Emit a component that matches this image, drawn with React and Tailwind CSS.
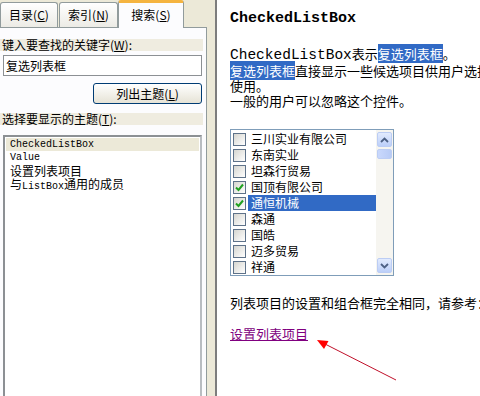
import React from 'react'

const items = [
  { label: '三川实业有限公司', on: false },
  { label: '东南实业', on: false },
  { label: '坦森行贸易', on: false },
  { label: '国顶有限公司', on: true },
  { label: '通恒机械', on: true, sel: true },
  { label: '森通', on: false },
  { label: '国皓', on: false },
  { label: '迈多贸易', on: false },
  { label: '祥通', on: false },
]

function Check({ on }) {
  return (
    <span className="flex h-[13px] w-[13px] shrink-0 items-center justify-center border border-[#5e7289] bg-linear-to-br from-[#d6d6d0] to-white">
      {on && (
        <svg width="9" height="9" viewBox="0 0 9 9">
          <path d="M1 4.5 L3.5 7 L8 1.5" stroke="#21a121" strokeWidth="2" fill="none" />
        </svg>
      )}
    </span>
  )
}

function ScrollBtn({ up }) {
  return (
    <div className="flex h-[15px] w-[15px] items-center justify-center rounded-[2px] border border-[#bccdf4] bg-linear-to-b from-[#e2ebfe] to-[#bccff9]">
      <svg width="9" height="6" viewBox="0 0 9 6">
        <path d={up ? 'M1 5 L4.5 1.5 L8 5' : 'M1 1 L4.5 4.5 L8 1'} stroke="#4d6185" strokeWidth="1.8" fill="none" />
      </svg>
    </div>
  )
}

const lat = "font-['Liberation_Mono',monospace] text-[10px]"

export default function App() {
  return (
    <div className="relative flex h-[396px] w-[480px] overflow-hidden bg-white font-['Noto_Sans_CJK_SC',sans-serif] text-black">
      {/* left: tabbed help pane */}
      <div className="flex w-[207px] shrink-0 flex-col bg-[#ece9d8]">
        <div className="flex h-[27px] items-end text-[12px]">
          <div className="flex h-[25px] w-[58px] items-center justify-center rounded-t-[3px] border border-b-0 border-[#919b9c] bg-linear-to-b from-white to-[#ecebe5]">
            目录(<u>C</u>)
          </div>
          <div className="ml-[1px] flex h-[25px] w-[59px] items-center justify-center rounded-t-[3px] border border-b-0 border-[#919b9c] bg-linear-to-b from-white to-[#ecebe5]">
            索引(<u>N</u>)
          </div>
          <div className="relative z-10 -mb-px flex h-[28px] w-[66px] items-center justify-center rounded-t-[3px] border-x border-t-[3px] border-x-[#919b9c] border-t-[#f5b440] bg-[#fcfcfe] pb-[2px]">
            搜索(<u>S</u>)
          </div>
        </div>
        <div className="flex flex-1 flex-col border-t border-r border-[#919b9c] bg-[#fcfcfe] text-[12px]">
          <div className="mt-[11px] mr-[3px] h-[12px] bg-[#efece0] pl-[2px] leading-[12px]">
            键入要查找的关键字(<u>W</u>):
          </div>
          <div className="mt-[4px] ml-[3px] h-[21px] w-[199px] border border-[#8c9094] bg-white pl-[2px] leading-[19px]">
            复选列表框
          </div>
          <div className="mt-[7px] ml-[93px] flex h-[21px] w-[109px] items-center justify-center rounded-[3px] border border-[#003c74] bg-linear-to-b from-white to-[#e6e3d6]">
            列出主题(<u>L</u>)
          </div>
          <div className="mt-[9px] mr-[3px] h-[12px] bg-[#efece0] pl-[2px] leading-[12px]">
            选择要显示的主题(<u>T</u>):
          </div>
          <div className="mt-[10px] ml-[3px] w-[199px] flex-1 border-[2px] border-[#8c9094] border-r-[#b9bdc1] border-b-0 bg-white p-px leading-[13px]">
            <div className={'bg-[#ece9d8] pl-[4px] ' + lat}>CheckedListBox</div>
            <div className={'pl-[4px] ' + lat}>Value</div>
            <div className="pl-[4px]">设置列表项目</div>
            <div className="pl-[4px]">
              与<span className={lat}>ListBox</span>通用的成员
            </div>
          </div>
        </div>
      </div>

      {/* splitter */}
      <div className="w-[8px] shrink-0 bg-[#ece9d8]" />
      <div className="w-[2px] shrink-0 bg-[#7d7d7d]" />

      {/* right: topic page */}
      <div className="flex-1 whitespace-nowrap pl-[13px]">
        <div className="mt-[10px] font-['Liberation_Mono',monospace] text-[15px] leading-[18px] font-bold">
          CheckedListBox
        </div>
        <div className="mt-[18px] text-[13px] leading-[15px]">
          <div>
            <span className="font-['Liberation_Mono',monospace] text-[14.5px]">CheckedListBox</span>表示
            <span className="bg-[#316ac5] text-white">复选列表框</span>。
          </div>
          <div>
            <span className="bg-[#316ac5] text-white">复选列表框</span>直接显示一些候选项目供用户选择，
          </div>
          <div>使用。</div>
          <div>一般的用户可以忽略这个控件。</div>
        </div>

        <div className="mt-[21px] flex h-[147px] w-[164px] border border-[#7f9db9] bg-white">
          <div className="flex flex-1 flex-col pt-px text-[12px] leading-[16px]">
            {items.map(it => (
              <div key={it.label} className="flex h-[16px] items-center pl-[2px]">
                <Check on={it.on} />
                <span className={'ml-[2px] flex-1 pl-[3px] ' + (it.sel ? 'bg-[#316ac5] text-white' : '')}>
                  {it.label}
                </span>
              </div>
            ))}
          </div>
          <div className="flex w-[17px] flex-col items-center bg-[#f6f5f0] py-[2px]">
            <ScrollBtn up />
            <div className="mt-[2px] h-[10px] w-[15px] rounded-[2px] border border-[#bccdf4] bg-linear-to-r from-[#c9d8fc] to-[#b8cbf6]" />
            <div className="flex-1" />
            <ScrollBtn />
          </div>
        </div>

        <div className="mt-[19px] text-[13px] leading-[15px]">列表项目的设置和组合框完全相同，请参考：</div>
        <div className="mt-[16px] text-[13px] leading-[15px] text-[#800080] underline">设置列表项目</div>
      </div>

      {/* red annotation arrow */}
      <svg className="pointer-events-none absolute top-0 left-0" width="480" height="396" viewBox="0 0 480 396">
        <line x1="396" y1="380" x2="325" y2="344" stroke="#c0102a" strokeWidth="1" />
        <polygon points="317,340 328.5,341 324,349" fill="#ff0000" />
      </svg>
    </div>
  )
}
